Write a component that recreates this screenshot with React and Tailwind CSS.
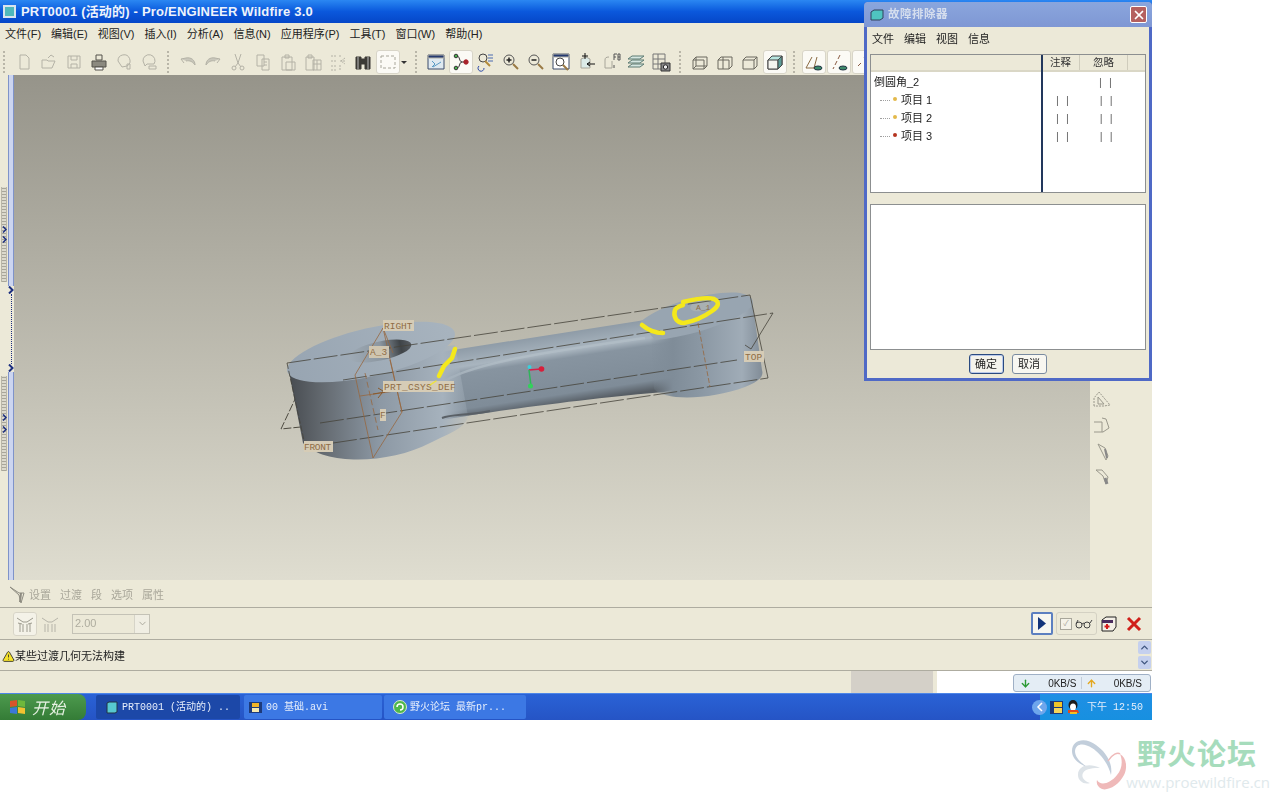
import { ChevronUp, ChevronDown, ArrowDown, ArrowUp, TriangleAlert, X } from 'lucide-react'

const menus = ['文件(F)', '编辑(E)', '视图(V)', '插入(I)', '分析(A)', '信息(N)', '应用程序(P)', '工具(T)', '窗口(W)', '帮助(H)']
const treeRows = [
  { label: '项目 1', dot: 'bg-[#e3b94a]' },
  { label: '项目 2', dot: 'bg-[#e3b94a]' },
  { label: '项目 3', dot: 'bg-[#b5341f]' },
]

function Ico({ children, active, w = 25 }) {
  return (
    <div style={{ width: w }} className="flex h-[25px] shrink-0 items-center justify-center">
      <div className={`flex h-[24px] w-[24px] items-center justify-center rounded-[3px] ${active ? 'border border-[#d8d5c8] bg-[#fbfaf5]' : ''}`}>
        <svg width="20" height="20" viewBox="0 0 20 20" fill="none" stroke="#b4b2a6" strokeWidth="1">
          {children}
        </svg>
      </div>
    </div>
  )
}

function Sep() {
  return <div className="mx-[6px] h-[22px] w-0 border-l-2 border-dotted border-[#b9b6a8]" />
}

function Toolbar() {
  return (
    <div className="flex h-[29px] items-center bg-[#ece9d8] pl-[3px] pt-[2px]">
      <div className="mr-[6px] h-[22px] border-l-2 border-dotted border-[#b9b6a8]" />
      <Ico><path d="M6 3h6l3 3v11H6z" /></Ico>
      <Ico><path d="M3 8h5l1 1h7l-3 7H3zM9 6l3-3 3 2" /></Ico>
      <Ico><path d="M4 4h12v12H4zM7 4v4h6V4M7 16v-4h6v4" /></Ico>
      <Ico>
        <path d="M7 3h6v5H7z" stroke="#55534c" />
        <path d="M3 9h14v6H3z" fill="#8b897f" stroke="#55534c" />
        <path d="M6 15h8v3H6z" fill="#fff" stroke="#55534c" />
      </Ico>
      <Ico><path d="M4 9a6 6 0 1 1 9 5l-5 1zM13 12v5h3v-5z" /></Ico>
      <Ico><path d="M4 9a6 6 0 1 1 11 3H8l-2 2zM10 14h7v3h-7z" /></Ico>
      <Sep />
      <Ico><path d="M3 7l3 4M3 7l5-1c5-1 9 2 9 7-2-3-5-5-9-4" fill="#c9c7bb" /></Ico>
      <Ico><path d="M17 7l-3 4M17 7l-5-1C7 5 3 8 3 13c2-3 5-5 9-4" fill="#c9c7bb" /></Ico>
      <Ico><path d="M7 2l3 9 3-9M10 11l-3 4M10 11l3 4" /><circle cx="6" cy="16" r="2" /><circle cx="14" cy="16" r="2" /></Ico>
      <Ico><path d="M4 3h7v11H4zM9 7h7v11H9zM11 10h3M11 13h3" /></Ico>
      <Ico><path d="M4 5h10v13H4zM7 3h4v3H7zM8 10h9v8H8z" /></Ico>
      <Ico><path d="M3 5h8v13H3zM5 3h4v3H5zM10 8h8v10h-8zM10 12h8M14 8v10" /></Ico>
      <Ico><path d="M3 4h5M3 9h5M3 14h5M3 18h5M12 3v3M12 9h6M12 13v5M17 6l-4 3 4 3" strokeDasharray="2 1" /></Ico>
      <Ico>
        <path d="M3 5h5v12H3zM12 5h5v12h-5zM8 7h4v5H8z" fill="#3c3b36" stroke="#3c3b36" />
        <path d="M5 5v12M15 5v12" stroke="#bbb" />
      </Ico>
      <Ico active><path d="M3 4h14v12H3z" strokeDasharray="3 2" stroke="#a8a69a" /></Ico>
      <svg width="10" height="20" viewBox="0 0 10 20" className="-ml-[1px]"><path d="M2 9h6l-3 3z" fill="#333" /></svg>
      <Sep />
      <Ico>
        <path d="M2 3h16v14H2z" fill="#dfe9f0" stroke="#3a4a6a" />
        <path d="M2 3h16v3H2z" fill="#253a70" />
        <path d="M6 9l3 3-3 3M7 15l8-5" stroke="#5a9ac4" />
      </Ico>
      <Ico active>
        <path d="M6 4c3 0 2 6 5 6M6 16c3 0 2-6 5-6h4" stroke="#333" />
        <circle cx="5" cy="4" r="1.8" fill="#4cb050" stroke="#333" />
        <circle cx="5" cy="16" r="1.8" fill="#4cb050" stroke="#333" />
        <circle cx="15" cy="10" r="2.2" fill="#a8222a" stroke="#a8222a" />
      </Ico>
      <Ico>
        <circle cx="7" cy="6" r="4" stroke="#444" />
        <path d="M12 3h5M12 6h5M12 9h5" stroke="#4a6ab0" />
        <path d="M9 9l5 5" stroke="#b28a3a" strokeWidth="2" />
        <path d="M3 14a3 3 0 1 0 5 2" stroke="#2b48a8" />
      </Ico>
      <Ico>
        <circle cx="8" cy="8" r="5" stroke="#555" />
        <path d="M5.5 8h5M8 5.5v5" stroke="#222" strokeWidth="1.5" />
        <path d="M12 12l5 5" stroke="#9a7a45" strokeWidth="2" />
      </Ico>
      <Ico>
        <circle cx="8" cy="8" r="5" stroke="#555" />
        <path d="M5.5 8h5" stroke="#222" strokeWidth="1.5" />
        <path d="M12 12l5 5" stroke="#9a7a45" strokeWidth="2" />
      </Ico>
      <Ico>
        <path d="M2 2h16v15H2z" fill="#fff" stroke="#3a4a6a" />
        <path d="M2 2h16v3H2z" fill="#253a70" />
        <circle cx="9" cy="10" r="4" stroke="#444" />
        <path d="M12 13l5 5" stroke="#9a7a45" strokeWidth="2" />
      </Ico>
      <Ico>
        <path d="M5 7l5-2 4 2v9H5z" fill="#dcebe8" stroke="#a8a69a" />
        <path d="M9 1v6M6 4h6M11 12h8M11 12l3-2M11 12l3 2" stroke="#111" />
      </Ico>
      <Ico>
        <path d="M4 8c0-2 1-3 4-3M4 8v8h7V9" stroke="#a8a69a" />
        <path d="M13 2h3M13 2v6M13 5h2M17 2h2v6h-2zM17 5h2M13 13v3" stroke="#555" />
      </Ico>
      <Ico>
        <path d="M2 7l4-3h12l-4 3zM2 11l4-3h12l-4 3zM2 15l4-3h12l-4 3z" stroke="#5d7a72" fill="#d6e7e1" />
      </Ico>
      <Ico>
        <path d="M2 2h12v15H2zM2 7h12M2 12h12M7 2v15" stroke="#777" />
        <path d="M10 11h9v8h-9z" fill="#888" stroke="#333" />
        <circle cx="14.500" cy="15" r="2.200" fill="#eee" stroke="#222" />
      </Ico>
      <Sep />
      <Ico><path d="M3 8h11v9H3zM3 8l3-3h11v9l-3 3M6 5v9h11M6 14l-3 3" stroke="#6b695f" /></Ico>
      <Ico><path d="M3 8h11v9H3zM3 8l3-3h11v9l-3 3M8 8V5M8 8v9" stroke="#6b695f" /></Ico>
      <Ico><path d="M3 8h11v9H3zM3 8l3-3h11v9l-3 3M14 8l3-3" stroke="#6b695f" /></Ico>
      <Ico active>
        <path d="M3 8l4-4h10v9l-4 4H3z" fill="#b8e6e0" stroke="#444" />
        <path d="M3 8h10v9H3z" fill="#f5f5f0" stroke="#444" />
        <path d="M13 8l4-4v9l-4 4z" fill="#5d9c98" stroke="#444" />
      </Ico>
      <Sep />
      <Ico active>
        <path d="M2 16L8 5M2 16h8M13 5l-3 11" stroke="#8a6a42" />
        <ellipse cx="14" cy="16" rx="4" ry="2" fill="#3d8a6a" stroke="#234" />
      </Ico>
      <Ico active>
        <path d="M11 3l-2 4M8 9l-2 4M5 15l-1 2" stroke="#8a5a42" />
        <ellipse cx="14" cy="16" rx="4" ry="2" fill="#3d8a6a" stroke="#234" />
      </Ico>
      <Ico active><path d="M4 14l3-3M12 3l-2 3" stroke="#8a5a42" /></Ico>
    </div>
  )
}

function Model() {
  return (
    <svg viewBox="14 75 1076 505" className="h-full w-full" fill="none">
      <defs>
        <linearGradient id="bossSide" x1="288" x2="470" y1="0" y2="0" gradientUnits="userSpaceOnUse">
          <stop offset="0" stopColor="#474b50" />
          <stop offset="0.18" stopColor="#62686e" />
          <stop offset="0.5" stopColor="#8c98a4" />
          <stop offset="0.85" stopColor="#a6b2bd" />
          <stop offset="1" stopColor="#a6b2bd" stopOpacity="0.2" />
        </linearGradient>
        <linearGradient id="topFace" x1="290" x2="450" y1="360" y2="335" gradientUnits="userSpaceOnUse">
          <stop offset="0" stopColor="#98a5b2" />
          <stop offset="1" stopColor="#a7b3be" />
        </linearGradient>
        <linearGradient id="arm" x1="560" x2="571" y1="331" y2="403" gradientUnits="userSpaceOnUse">
          <stop offset="0" stopColor="#8b98a4" />
          <stop offset="0.28" stopColor="#a9b5bf" />
          <stop offset="0.38" stopColor="#8794a0" />
          <stop offset="0.86" stopColor="#7f8c98" />
          <stop offset="1" stopColor="#565d64" />
        </linearGradient>
        <linearGradient id="rightSide" x1="650" x2="765" y1="0" y2="0" gradientUnits="userSpaceOnUse">
          <stop offset="0" stopColor="#7f8c98" stopOpacity="0" />
          <stop offset="0.2" stopColor="#7f8c98" />
          <stop offset="0.45" stopColor="#8b98a4" />
          <stop offset="0.8" stopColor="#a0acb7" />
          <stop offset="1" stopColor="#7d8893" />
        </linearGradient>
        <linearGradient id="hole" x1="345" x2="411" y1="0" y2="0" gradientUnits="userSpaceOnUse">
          <stop offset="0" stopColor="#a1adb8" />
          <stop offset="0.55" stopColor="#8b96a0" />
          <stop offset="0.85" stopColor="#3f4448" />
          <stop offset="1" stopColor="#54595e" />
        </linearGradient>
      </defs>

      {/* back of plane */}
      <path d="M297 395L281 429L330 424" stroke="#4d4a40" strokeDasharray="8 2" />

      {/* arm */}
      <path d="M440 352L645 320L680 335L680 388L664 392C600 397 500 410 442 420Z" fill="url(#arm)" />
      <path d="M440 384C470 362 560 350 645 338" stroke="#b6c1ca" strokeWidth="2.500" opacity="0.6" />

      {/* right boss */}
      <path d="M650 320L654 389C664 401 710 400 745 387C760 381 764 376 762 370L752 300Z" fill="url(#rightSide)" />
      <path d="M640 322C665 302 715 290 740 293C756 296 756 305 745 312C720 328 680 338 655 340Z" fill="#98a5b1" />
      <ellipse cx="700" cy="306" rx="10" ry="5" transform="rotate(-12 700 306)" fill="#a9b0b2" />

      {/* left boss */}
      <path d="M288 367L303 443C325 466 390 464 430 443C450 433 466 428 468 416L455 345Z" fill="url(#bossSide)" />
      <ellipse cx="371" cy="352" rx="86" ry="24" transform="rotate(-13 371 352)" fill="url(#topFace)" />
      <ellipse cx="380" cy="351" rx="32" ry="9.500" transform="rotate(-12 380 351)" fill="url(#hole)" />
      <path d="M442 418C452 414 465 416 490 411" stroke="#5a6066" strokeWidth="2" />

      {/* datum planes */}
      <g stroke="#45433a" strokeWidth="0.8" strokeDasharray="24 3">
        <path d="M287 363L750 295" />
        <path d="M343 380L773 313" />
        <path d="M320 423L737 360" />
        <path d="M333 443L768 378" />
      </g>
      <path d="M287 363L305 445" stroke="#45433a" strokeDasharray="6 2" strokeWidth="0.8" />
      <path d="M750 295L768 378M773 313L751 349L745 345" stroke="#45433a" strokeWidth="0.8" />

      <g stroke="#97673f" strokeWidth="0.8">
        <path d="M383 328L355 375L373 458L402 412ZM383 328L393 353M390 360L402 412" />
        <path d="M365 373L378 430" strokeDasharray="6 3" />
        <path d="M360 396L402 390" />
        <path d="M698 323L710 387" strokeDasharray="5 2" />
      </g>
      <path d="M378 388l5 3M378 398l8-10M373 394l12-2" stroke="#8a5a2c" />

      {/* labels */}
      <g fontFamily="'Liberation Mono',monospace" fontSize="9.500" fill="#8f6c45">
        <rect x="383" y="320" width="31" height="11" fill="#d6ccb6" />
        <text x="384" y="328.500">RIGHT</text>
        <rect x="369" y="346" width="20" height="12" fill="#cfc5b0" />
        <text x="370" y="355">A_3</text>
        <rect x="383" y="381" width="71" height="11" fill="#d6ccb6" />
        <text x="384" y="390" letterSpacing="0.300">PRT_CSYS_DEF</text>
        <rect x="380" y="409" width="6" height="12" fill="#d6ccb6" />
        <text x="380" y="418">F</text>
        <rect x="304" y="441" width="29" height="11" fill="#d6ccb6" />
        <text x="304" y="450" letterSpacing="-0.300">FRONT</text>
        <rect x="744" y="351" width="20" height="11" fill="#d6ccb6" />
        <text x="745" y="360">TOP</text>
        <text x="696" y="310" fontSize="8">A_1</text>
      </g>

      {/* csys */}
      <path d="M529 370L541 369" stroke="#d81e4a" strokeWidth="1.500" />
      <path d="M529 370L531 386" stroke="#2fb55a" strokeWidth="1.500" />
      <circle cx="541.500" cy="369" r="2.800" fill="#d81e3a" />
      <circle cx="529.500" cy="367" r="2" fill="#39d0dc" />
      <circle cx="530.500" cy="386" r="2.500" fill="#32d25a" />

      {/* markup strokes */}
      <g stroke="#f4e81c" strokeWidth="4.500" strokeLinecap="round" strokeLinejoin="round">
        <path d="M455 349L452 358L444 366L439 376" />
        <path d="M436 381L430 385" strokeWidth="1.500" opacity="0.8" />
        <path d="M683 302C695 299 708 297 714 299C720 302 719 306 712 311C705 316 695 321 684 323C676 323 673 316 675 310C676 307 680 306 683 305" />
        <path d="M642 325C648 330 654 333 663 333" />
      </g>
    </svg>
  )
}

function Grip({ className, arrows }) {
  return (
    <div className={`relative w-[6px] border-x border-[#b9b6a8] bg-[repeating-linear-gradient(0deg,#a8a69a_0_1px,#dcdacd_1px_3px)] ${className}`}>
      {arrows.map(top => (
        <svg key={top} style={{ top }} width="5" height="7" viewBox="0 0 5 7" fill="none" stroke="#1c2f80" strokeWidth="1.500" className="absolute left-0">
          <path d="M1 0.500l3 3-3 3" />
        </svg>
      ))}
    </div>
  )
}

function LeftRail() {
  return (
    <div className="flex w-[14px] shrink-0 bg-[#ece9d8]">
      <div className="flex w-[8px] flex-col pl-[1px] pt-[112px]">
        <Grip className="h-[95px]" arrows={[39, 49]} />
        <div className="h-[94px]" />
        <Grip className="h-[95px]" arrows={[38, 50]} />
      </div>
      <div className="flex w-[6px] flex-col">
        <div className="flex h-[211px] justify-between bg-[#ccd5f0]">
          <div className="w-px bg-[#7f93c9]" />
          <div className="w-px bg-[#7f93c9]" />
        </div>
        <div className="flex h-[86px] flex-col items-center justify-between">
          <svg width="6" height="8" viewBox="0 0 6 8" fill="none" stroke="#1c2f80" strokeWidth="2"><path d="M1 0.500l3.500 3.500L1 7.500" /></svg>
          <div className="w-0 flex-1 border-l border-dotted border-[#1c2f80]" />
          <svg width="6" height="8" viewBox="0 0 6 8" fill="none" stroke="#1c2f80" strokeWidth="2"><path d="M1 0.500l3.500 3.500L1 7.500" /></svg>
        </div>
        <div className="flex flex-1 justify-between bg-[#ccd5f0]">
          <div className="w-px bg-[#7f93c9]" />
          <div className="w-px bg-[#7f93c9]" />
        </div>
      </div>
    </div>
  )
}

function RightRail() {
  return (
    <div className="flex w-[62px] shrink-0 flex-col gap-[8px] bg-[#ece9d8] pl-[3px] pt-[315px]">
      <svg width="18" height="18" viewBox="0 0 18 18" fill="none" stroke="#9a988c"><path d="M1 16V8l5-6 11 13-6 1z" strokeDasharray="2 1" /><path d="M5 7l6 7H5z" /></svg>
      <svg width="18" height="18" viewBox="0 0 18 18" fill="none" stroke="#9a988c"><path d="M1 6h8M1 16h9l6-4-3-9-4-1M9 6v10" /></svg>
      <svg width="18" height="18" viewBox="0 0 18 18" fill="none" stroke="#9a988c"><path d="M5 2l7 4 3 8-2 4-4-8z" /><path d="M12 7l2 9" stroke="#888" strokeWidth="2" /></svg>
      <svg width="18" height="18" viewBox="0 0 18 18" fill="none" stroke="#9a988c"><path d="M3 2h6l6 7-2 7-3-8z" /><path d="M12 10l2 6" stroke="#888" strokeWidth="3" /></svg>
    </div>
  )
}

function Dialog() {
  return (
    <div className="absolute right-0 top-[2px] flex h-[379px] w-[288px] flex-col rounded-t-[4px] border-[3px] border-t-0 border-[#4f69c6] bg-[#ece9d8]">
      <div className="-mx-[3px] flex h-[25px] shrink-0 items-center justify-between rounded-t-[4px] bg-gradient-to-b from-[#8aa6dd] to-[#7f97d4] pl-[6px] pr-[5px]">
        <div className="flex items-center gap-[4px]">
          <svg width="14" height="14" viewBox="0 0 14 14"><path d="M1 4l3-2h9v8l-3 2H1z" fill="#4fc4c0" stroke="#31425c" /></svg>
          <span className="text-[11.500px] font-bold tracking-[0.500px] text-[#d5deee]">故障排除器</span>
        </div>
        <div className="flex h-[17px] w-[17px] items-center justify-center rounded-[2px] border border-white bg-[#b5605f]">
          <X size={14} strokeWidth={3} color="#fff" />
        </div>
      </div>
      <div className="flex h-[27px] shrink-0 items-center gap-[10px] pb-[3px] pl-[5px] text-[11px] text-[#222]">
        <span>文件</span><span>编辑</span><span>视图</span><span>信息</span>
      </div>
      <div className="mx-[3px] flex h-[139px] shrink-0 border border-[#8c8f90] bg-white">
        <div className="relative flex w-[170px] shrink-0 flex-col">
          <div className="h-[17px] border-b-2 border-[#dad7c6] bg-[#ece9d8]" />
          <div className="pl-[3px] pt-[1px] text-[11px] leading-[18px] text-[#222]">
            <div>倒圆角_2</div>
            {treeRows.map(row => (
              <div key={row.label} className="flex items-center pl-[6px]">
                <div className="mr-[3px] w-[10px] border-b border-dotted border-[#a0a0a0]" />
                <div className={`mb-[3px] mr-[4px] h-[4px] w-[4px] rounded-full ${row.dot}`} />
                <span>{row.label}</span>
              </div>
            ))}
          </div>
        </div>
        <div className="w-[2px] shrink-0 bg-[#22375c]" />
        <div className="flex flex-1 flex-col">
          <div className="flex h-[17px] items-center border-b-2 border-[#dad7c6] bg-[#ece9d8] pl-[7px] text-[10.500px] text-[#333]">
            <span className="w-[30px] border-r border-[#cfccbc]">注释</span>
            <span className="w-[48px] border-r border-[#cfccbc] pl-[13px]">忽略</span>
          </div>
          <div className="pt-[1px] text-[11px] leading-[18px] text-[#666]">
            <div className="h-[18px] pl-[56px] tracking-[2px]">| |</div>
            {treeRows.map(row => (
              <div key={row.label} className="flex h-[18px] gap-[29px] pl-[13px] tracking-[2px]"><span>| |</span><span>| |</span></div>
            ))}
          </div>
        </div>
      </div>
      <div className="mx-[3px] mt-[11px] h-[146px] shrink-0 border border-[#8c8f90] bg-white" />
      <div className="flex flex-1 items-center justify-center gap-[8px] pr-[1px] text-[11px] text-[#222]">
        <div className="flex h-[20px] w-[35px] items-center justify-center rounded-[3px] border border-[#2a4a80] bg-[#f4f3ec] shadow-[inset_0_0_0_1px_#b9c9ea]">确定</div>
        <div className="flex h-[20px] w-[35px] items-center justify-center rounded-[3px] border border-[#7a8ba0] bg-[#f8f7f1]">取消</div>
      </div>
    </div>
  )
}

function BottomPanels() {
  return (
    <>
      <div className="flex h-[28px] items-center gap-[9px] border-b border-[#aeaca0] bg-[#ece9d8] pl-[9px] pt-[3px] text-[11px] text-[#a9a79a]">
        <svg width="18" height="20" viewBox="0 0 18 20" fill="none" stroke="#8d8b80"><path d="M1 2l9 6 5 0-3 10-2-8z" /><path d="M12 8l-1 9" strokeWidth="2" /></svg>
        <span className="-ml-[7px]">设置</span><span>过渡</span><span>段</span><span>选项</span><span>属性</span>
      </div>
      <div className="flex h-[32px] items-center border-b border-[#aeaca0] bg-[#ece9d8] pl-[13px]">
        <div className="flex h-[24px] w-[24px] items-center justify-center rounded-[3px] border border-[#d8d5c8] bg-[#f4f2e8]">
          <svg width="20" height="20" viewBox="0 0 20 20" fill="none" stroke="#9c9a8e"><path d="M2 4l6 4 2 0 2 0 6-4M5 18V10M15 18V10M8 18V10M12 18V10M3 9l4 1M17 9l-4 1" /></svg>
        </div>
        <svg width="20" height="20" viewBox="0 0 20 20" fill="none" stroke="#b5b3a8" className="ml-[3px]"><path d="M2 4l6 4 2 0 2 0 6-4M5 18V10M15 18V10M8 18V10M12 18V10" /></svg>
        <div className="ml-[12px] flex h-[20px] w-[78px] items-center justify-between border border-[#c4c2b6] pl-[2px] text-[11px] text-[#aeac9f]">
          <span>2.00</span>
          <div className="flex h-[18px] w-[15px] items-center justify-center border-l border-[#d6d4c8] bg-[#f0eee3]">
            <ChevronDown size={11} color="#a6a498" />
          </div>
        </div>
        <div className="ml-auto mr-[8px] flex items-center">
          <div className="flex h-[23px] w-[22px] items-center justify-center rounded-[2px] border-2 border-[#5c7fc0] bg-[#f7f6f0]">
            <svg width="10" height="13" viewBox="0 0 10 13"><path d="M1 0l8 6.500-8 6.500z" fill="#13347a" /></svg>
          </div>
          <div className="ml-[3px] flex h-[23px] w-[41px] items-center gap-[3px] rounded-[3px] border border-[#d4d1c3] pl-[3px]">
            <div className="flex h-[12px] w-[12px] items-center justify-center border border-[#a8a69a] bg-[#f4f2e8] text-[8px] text-[#a8a69a]">✓</div>
            <svg width="18" height="12" viewBox="0 0 18 12" fill="none" stroke="#444"><circle cx="4" cy="7" r="3" /><circle cx="12" cy="7" r="3" /><path d="M7 6l2-1M15 5l2-3M1 6l2-4" /></svg>
          </div>
          <svg width="18" height="18" viewBox="0 0 18 18" className="ml-[3px]"><path d="M2 5l4-3h10v10l-3 4H2z" fill="#f3efe6" stroke="#222" /><path d="M2 5h11v3H2z" fill="#4a2c5e" /><path d="M7 9v5M4.500 11.500h5" stroke="#d41a1a" strokeWidth="2" /></svg>
          <svg width="16" height="16" viewBox="0 0 16 16" className="ml-[8px] mr-[2px]"><path d="M2 2l12 12M14 2L2 14" stroke="#d0201a" strokeWidth="3" /></svg>
        </div>
      </div>
      <div className="flex h-[31px] items-center justify-between border-b border-[#aeaca0] bg-[#ece9d8] pl-[2px] pr-[1px] text-[11px] text-[#222]">
        <div className="flex items-center pt-[2px]">
          <TriangleAlert size={13} fill="#f6e22a" color="#222" strokeWidth={1.500} />
          <span>某些过渡几何无法构建</span>
        </div>
        <div className="flex flex-col gap-[2px]">
          <div className="flex h-[13px] w-[13px] items-center justify-center rounded-[2px] bg-[#c5d0ee]"><ChevronUp size={11} strokeWidth={3} color="#3f557f" /></div>
          <div className="flex h-[13px] w-[13px] items-center justify-center rounded-[2px] bg-[#c5d0ee]"><ChevronDown size={11} strokeWidth={3} color="#3f557f" /></div>
        </div>
      </div>
      <div className="flex h-[22px] items-center bg-[#ece9d8] pl-[851px]">
        <div className="h-[22px] w-[82px] bg-[#d4d0c8]" />
        <div className="relative ml-[4px] h-[22px] flex-1 bg-white">
          <div className="absolute bottom-[1px] right-[1px] flex h-[18px] w-[138px] items-center rounded-[3px] border border-[#9fb0c6] bg-[#e4edf5] pl-[6px] pr-[8px] text-[10px] text-[#222]">
            <ArrowDown size={11} strokeWidth={3} color="#2c9a34" />
            <span className="ml-auto">0KB/S</span>
            <span className="mx-[4px] h-[12px] border-l border-[#c4cdd8]" />
            <ArrowUp size={11} strokeWidth={3} color="#e3a71e" />
            <span className="ml-auto">0KB/S</span>
          </div>
        </div>
      </div>
    </>
  )
}

function Taskbar() {
  return (
    <div className="flex h-[27px] items-center border-t border-[#4d86e8] bg-gradient-to-b from-[#2a62d6] to-[#2554c5] font-['Liberation_Mono','Noto_Sans_CJK_SC',monospace] text-[10px] text-[#e6eefb]">
      <div className="flex h-full w-[86px] items-center gap-[5px] rounded-r-[8px] bg-gradient-to-b from-[#4d9a4e] to-[#347c36] pl-[9px]">
        <svg width="18" height="18" viewBox="0 0 18 18">
          <path d="M1 3l7-1v6l-7 1z" fill="#d9542b" />
          <path d="M9 2l7 1v6l-7-1z" fill="#6fb83c" />
          <path d="M1 10l7-1v7l-7-1z" fill="#3c78d8" />
          <path d="M9 9l7 1v6l-7-1z" fill="#f2c230" />
        </svg>
        <span className="font-['Noto_Sans_CJK_SC',sans-serif] text-[16px] italic leading-none tracking-[1px] text-[#e8f2e4]">开始</span>
      </div>
      <div className="ml-[10px] flex h-[24px] w-[144px] items-center gap-[4px] rounded-[2px] bg-[#1c48a8] pl-[10px]">
        <svg width="12" height="13" viewBox="0 0 12 13"><path d="M1 2l2-1h8v10l-2 1H1z" fill="#57c8d0" stroke="#234" /></svg>
        <span>PRT0001 (活动的) ..</span>
      </div>
      <div className="ml-[4px] flex h-[24px] w-[138px] items-center gap-[4px] rounded-[2px] bg-[#3c78e4] pl-[5px]">
        <svg width="13" height="13" viewBox="0 0 13 13"><path d="M0 1h13v11H0z" fill="#1d3a7a" /><path d="M3 2h7v4H3z" fill="#f0b428" /><path d="M3 7h7v4H3z" fill="#f5e9b0" /></svg>
        <span>00 基础.avi</span>
      </div>
      <div className="ml-[2px] flex h-[24px] w-[142px] items-center gap-[3px] rounded-[2px] bg-[#3c78e4] pl-[9px]">
        <svg width="14" height="14" viewBox="0 0 14 14"><circle cx="7" cy="7" r="6.500" fill="#4fb84a" stroke="#d8e8d0" /><path d="M4 7a3 3 0 1 1 3 3" stroke="#fff" fill="none" strokeWidth="1.500" /></svg>
        <span>野火论坛 最新pr...</span>
      </div>
      <div className="ml-auto flex h-full w-[112px] items-center bg-gradient-to-b from-[#1f8fe4] to-[#1790e0]">
        <div className="-ml-[8px] flex h-[15px] w-[15px] shrink-0 items-center justify-center rounded-full bg-[#6ea6ec]">
          <svg width="8" height="10" viewBox="0 0 8 10" fill="none" stroke="#fff" strokeWidth="1.500"><path d="M6 1L2 5l4 4" /></svg>
        </div>
        <svg width="14" height="15" viewBox="0 0 14 15" className="ml-[3px]"><path d="M0 1h13v13H0z" fill="#1d3a7a" /><path d="M4 2h8v5H4z" fill="#f0c428" /><path d="M4 8h8v5H4z" fill="#f5d45a" /></svg>
        <svg width="15" height="16" viewBox="0 0 15 16" className="ml-[2px]"><ellipse cx="7" cy="6" rx="4.500" ry="5" fill="#1c1c1c" /><ellipse cx="7" cy="8" rx="3" ry="3.500" fill="#fff" /><path d="M2 11h10l1 3H2z" fill="#e34a1a" /><path d="M4 14h7" stroke="#f5c020" strokeWidth="2" /></svg>
        <span className="ml-[6px] whitespace-nowrap">下午 12:50</span>
      </div>
    </div>
  )
}

function Watermark() {
  return (
    <div className="flex h-[80px] justify-end pr-[10px] pt-[17px]">
      <svg width="58" height="54" viewBox="0 0 58 54" fill="none" className="-mr-[2px]">
        <path d="M2 14C2 2 16 0 26 8C36 15 43 26 41 38C38 26 30 16 22 11C14 6 6 6 5 14C5 20 10 25 17 30C9 27 2 22 2 14Z" fill="#c2cedb" />
        <path d="M38 24C42 17 48 15 50 17" stroke="#efb9b9" strokeWidth="1.500" />
        <path d="M50 17C56 20 58 30 54 38C49 48 38 54 32 52C28 50 26 47 27 43C30 49 40 47 47 38C52 32 53 24 50 17Z" fill="#efb9b9" />
        <path d="M30 31C20 26 8 28 8 38C8 44 14 48 20 46C14 44 11 40 13 36C16 31 24 31 30 31Z" fill="#dde3e8" />
      </svg>
      <div className="flex flex-col items-end">
        <div className="mr-[13px] font-['Noto_Sans_CJK_SC',sans-serif] text-[29px] font-bold leading-[30px] tracking-[1px] text-[#a6dcbc]">野火论坛</div>
        <div className="mt-[6px] font-['Open_Sans',sans-serif] text-[15px] leading-[18px] text-[#e0e9ec]">www.proewildfire.cn</div>
      </div>
    </div>
  )
}

export default function App() {
  return (
    <div className="min-h-[800px] w-[1280px] overflow-hidden bg-white font-['Liberation_Sans','Noto_Sans_CJK_SC',sans-serif]">
      <div className="relative h-[720px] w-[1152px] blur-[0.35px]">
        <div className="flex h-[23px] items-center gap-[5px] bg-gradient-to-b from-[#2b87f2] via-[#0b58dc] to-[#0647c8] pl-[3px]">
          <svg width="13" height="13" viewBox="0 0 13 13"><path d="M0 0h13v13H0z" fill="#d8e4ee" /><path d="M2 2h9v9H2z" fill="#4fb8bc" /></svg>
          <span className="whitespace-nowrap text-[13px] font-bold tracking-[0.200px] text-[#eef3fb]">PRT0001 (活动的) - Pro/ENGINEER Wildfire 3.0</span>
        </div>
        <div className="flex h-[23px] items-center gap-[10px] bg-[#ece9d8] pl-[5px] text-[11px] text-[#222]">
          {menus.map(m => <span key={m}>{m}</span>)}
        </div>
        <Toolbar />
        <div className="flex h-[505px]">
          <LeftRail />
          <div className="min-w-0 flex-1 bg-gradient-to-b from-[#96948a] to-[#dfddd0]">
            <Model />
          </div>
          <RightRail />
        </div>
        <BottomPanels />
        <Taskbar />
        <Dialog />
      </div>
      <Watermark />
    </div>
  )
}
